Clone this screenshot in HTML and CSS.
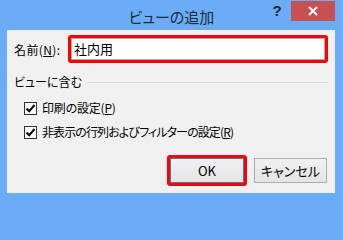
FILE: index.html
```html
<!DOCTYPE html>
<html lang="ja">
<head>
<meta charset="utf-8">
<title>ビューの追加</title>
<link rel="stylesheet" href="styles.css">
</head>
<body>
<div class="window">
  <div class="titlebar">
    <div class="title">ビューの追加</div>
    <div class="controls">
      <span class="help">?</span>
      <span class="close"><svg width="10" height="10" viewBox="0 0 10 10"><path d="M1 1 L9 9 M9 1 L1 9" stroke="#fff" stroke-width="2" fill="none"/></svg></span>
    </div>
  </div>
  <div class="client">
    <div class="name-row">
      <label class="name-label">名前(<u>N</u>):</label>
      <div class="highlight input-hl">
        <div class="textbox">社内用</div>
      </div>
    </div>
    <div class="group-head">
      <span class="group-text">ビューに含む</span>
      <span class="group-line"></span>
    </div>
    <div class="checks">
      <div class="check-row">
        <span class="checkbox"><svg width="11" height="11" viewBox="0 0 11 11"><path d="M1.5 5.5 L4.2 8.3 L9.5 2" stroke="#000" stroke-width="2" fill="none"/></svg></span>
        <span class="check-text">印刷の設定(<u>P</u>)</span>
      </div>
      <div class="check-row">
        <span class="checkbox"><svg width="11" height="11" viewBox="0 0 11 11"><path d="M1.5 5.5 L4.2 8.3 L9.5 2" stroke="#000" stroke-width="2" fill="none"/></svg></span>
        <span class="check-text narrow">非表示の行列およびフィルターの設定(<u>R</u>)</span>
      </div>
    </div>
    <div class="buttons">
      <div class="highlight btn-hl">
        <button class="btn btn-default">OK</button>
      </div>
      <button class="btn">キャンセル</button>
    </div>
  </div>
</div>
</body>
</html>
```
FILE: styles.css
```css
* { box-sizing: border-box; }
html, body {
  margin: 0;
  padding: 0;
}
body {
  width: 343px;
  height: 201px;
  overflow: hidden;
  background: #6aadf6;
  font-family: "Noto Sans CJK JP", "Noto Sans", sans-serif;
  font-feature-settings: "palt";
  color: #000;
}
.window {
  width: 343px;
  height: 201px;
  display: flex;
  flex-direction: column;
}
.titlebar {
  height: 30px;
  display: grid;
}
.title, .controls {
  grid-area: 1 / 1;
}
.title {
  text-align: center;
  font-size: 15px;
  line-height: 28px;
  padding-top: 3px;
  color: #1d2a3a;
}
.controls {
  justify-self: end;
  display: flex;
  align-items: flex-start;
  margin-right: 8px;
  margin-top: 1px;
}
.help {
  width: 16px;
  margin-right: 6px;
  text-align: center;
  font-family: "Liberation Sans", sans-serif;
  font-weight: bold;
  font-size: 15px;
  line-height: 20px;
  color: #1a2633;
}
.close {
  width: 44px;
  height: 20px;
  background: #c75050;
  display: flex;
  align-items: center;
  justify-content: center;
}
.close svg { display: block; }
.client {
  flex: 1;
  margin: 0 8px 8px 7px;
  background: #f0f0f0;
  display: flex;
  flex-direction: column;
  padding: 5px 7px 7px 7px;
  font-size: 12px;
}
.name-row {
  display: flex;
  align-items: center;
  height: 28px;
}
.name-label {
  width: 54px;
  line-height: 16px;
  padding-top: 2px;
  letter-spacing: 0.4px;
}
.highlight {
  border: 3px solid #ff0000;
  border-radius: 3px;
}
.input-hl {
  flex: 1;
  height: 28px;
}
.textbox {
  height: 22px;
  background: #fff;
  border: 1px solid #abadb3;
  padding-left: 2px;
  font-size: 13px;
  line-height: 20px;
}
.group-head {
  margin-top: 12px;
  display: flex;
  align-items: center;
  height: 14px;
}
.group-text {
  line-height: 14px;
}
.group-line {
  flex: 1;
  height: 1px;
  background: #dcdcdc;
  margin-left: 5px;
}
.checks {
  margin-top: 7px;
  padding-left: 10px;
}
.check-row {
  height: 24px;
  display: flex;
  align-items: center;
}
.checkbox {
  width: 13px;
  height: 13px;
  border: 1px solid #333;
  background: #fff;
  margin-right: 5px;
  display: flex;
  align-items: center;
  justify-content: center;
}
.checkbox svg { display: block; }
.check-text {
  line-height: 16px;
  letter-spacing: -0.2px;
}
.check-text.narrow {
  letter-spacing: -0.9px;
}
.buttons {
  margin-top: auto;
  display: flex;
  justify-content: flex-end;
  align-items: center;
  gap: 7px;
  padding-right: 1px;
}
.btn-hl {
  display: flex;
}
.btn {
  width: 73px;
  height: 25px;
  border: 1px solid #acacac;
  background: linear-gradient(#f0f0f0, #e5e5e5);
  font-family: "Noto Sans CJK JP", "Noto Sans", sans-serif;
  font-feature-settings: "palt";
  font-size: 13px;
  color: #000;
  padding: 0;
  margin: 0;
  border-radius: 0;
}
.btn-default {
  width: 74px;
  border-color: #3c7fb1;
}
```
